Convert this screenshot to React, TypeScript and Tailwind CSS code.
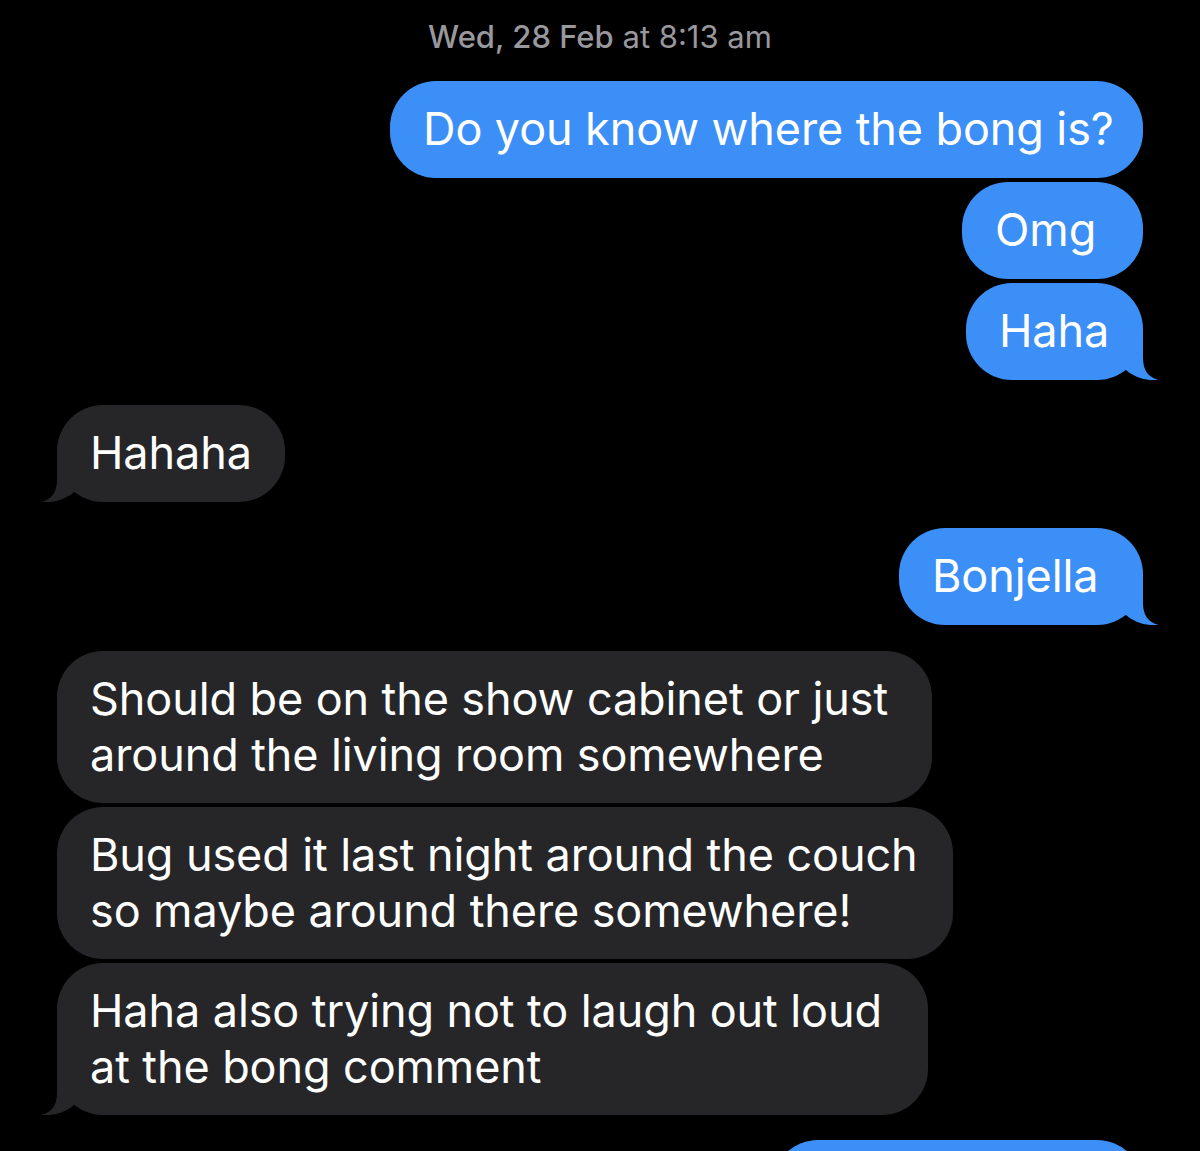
import React from "react";

const BLUE = "bg-[#3b8ff6]";
const GRAY = "bg-[#262629]";

function Tail({ side, fill }: { side: "left" | "right"; fill: string }) {
  const pos =
    side === "right"
      ? "absolute right-[-16px] bottom-0"
      : "absolute left-[-16px] bottom-0 -scale-x-100";
  return (
    <svg className={pos} width="48" height="48" viewBox="0 0 48 48">
      <path
        d="M 20 0 L 32 0 L 32 26 C 32 38 37 45 47.5 48 C 36 49 24 46 15 38 L 10 30 Z"
        fill={fill}
      />
    </svg>
  );
}

function Bubble({
  children,
  side,
  width,
  tail,
  className = "",
}: {
  children?: React.ReactNode;
  side: "left" | "right";
  width: string;
  tail?: boolean;
  className?: string;
}) {
  const isRight = side === "right";
  return (
    <div className={`flex ${isRight ? "justify-end" : "justify-start"} ${className}`}>
      <div
        className={`relative ${width} ${isRight ? BLUE : GRAY} rounded-[46px] min-h-[97px] pl-[33px] pr-[20px] py-[20px] text-white text-[45px] leading-[56px] tracking-[-0.1px] whitespace-nowrap`}
      >
        {tail && <Tail side={side} fill={isRight ? "#3b8ff6" : "#262629"} />}
        <span className="relative">{children}</span>
      </div>
    </div>
  );
}

export default function App() {
  return (
    <div
      className="w-[1200px] h-[1151px] overflow-hidden bg-black px-[57px]"
      style={{ fontFamily: "Inter, 'Noto Sans', sans-serif" }}
    >
      <div className="pt-[17px] h-[81px] text-center text-[31px] leading-[40px] text-[#98989d]">
        <span className="font-medium">Wed, 28 Feb</span>
        <span> at 8:13 am</span>
      </div>

      <div className="flex flex-col gap-[4px]">
        <Bubble side="right" width="w-[753px]">Do you know where the bong is?</Bubble>
        <Bubble side="right" width="w-[181px]">Omg</Bubble>
        <Bubble side="right" width="w-[177px]" tail>Haha</Bubble>
      </div>

      <Bubble side="left" width="w-[228px]" tail className="mt-[25px]">Hahaha</Bubble>

      <Bubble side="right" width="w-[244px]" tail className="mt-[26px]">Bonjella</Bubble>

      <div className="flex flex-col gap-[4px] mt-[26px]">
        <Bubble side="left" width="w-[875px]">
          Should be on the show cabinet or just
          <br />
          around the living room somewhere
        </Bubble>
        <Bubble side="left" width="w-[896px]">
          Bug used it last night around the couch
          <br />
          so maybe around there somewhere!
        </Bubble>
        <Bubble side="left" width="w-[871px]" tail>
          Haha also trying not to laugh out loud
          <br />
          at the bong comment
        </Bubble>
      </div>

      <Bubble side="right" width="w-[371px]" className="mt-[25px]">&nbsp;</Bubble>
    </div>
  );
}
